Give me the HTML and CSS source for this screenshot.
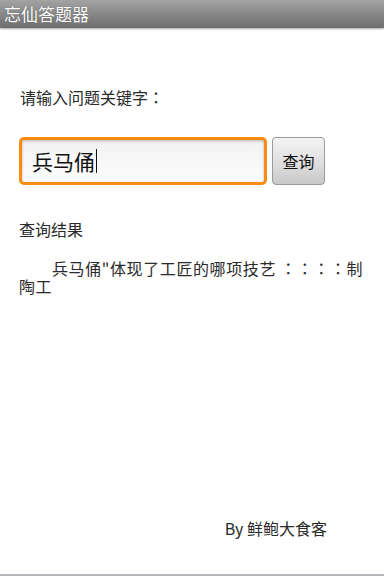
FILE: index.html
```html
<!DOCTYPE html>
<html>
<head>
<meta charset="utf-8">
<link rel="stylesheet" href="styles.css">
</head>
<body>
<div class="app">
  <div class="titlebar">忘仙答题器</div>
  <div class="content">
    <div class="label">请输入问题关键字<span class="colon">：</span></div>
    <div class="search-row">
      <div class="input"><span class="input-text">兵马俑</span><span class="caret"></span></div>
      <div class="button">查询</div>
    </div>
    <div class="result-title">查询结果</div>
    <div class="result">兵马俑"体现了工匠的哪项技艺 <span class="colon">：：：：</span>制陶工</div>
    <div class="spacer"></div>
    <div class="footer">By 鲜鲍大食客</div>
  </div>
  <div class="bottom-line"></div>
</div>
</body>
</html>
```

FILE: styles.css
```css
html, body {
  margin: 0;
  padding: 0;
  background: #ffffff;
}
.app {
  width: 384px;
  height: 576px;
  display: flex;
  flex-direction: column;
  font-family: "Noto Sans CJK SC", "DejaVu Sans", sans-serif;
  color: #2a2a2a;
  text-spacing-trim: space-all;
}
.colon {
  font-family: "Noto Sans CJK TC", sans-serif;
}
.titlebar {
  height: 28px;
  line-height: 28px;
  padding-left: 4px;
  font-size: 17px;
  color: #ffffff;
  background: linear-gradient(#a3a3a3, #888888 50%, #6e6e6e);
  box-shadow: 0 1px 2px rgba(0,0,0,0.35);
  text-shadow: 0 0 1px rgba(0,0,0,0.4);
}
.content {
  flex: 1;
  display: flex;
  flex-direction: column;
  padding: 0 19px;
}
.label {
  margin-top: 58px;
  font-size: 16px;
  line-height: 22px;
  padding-left: 1px;
}
.search-row {
  display: flex;
  gap: 5px;
  margin-top: 29px;
}
.input {
  width: 232px;
  height: 42px;
  border: 3px solid #f98a12;
  border-radius: 5px;
  background: linear-gradient(#f2f2f2, #fdfdfd);
  box-shadow: inset 0 1px 3px rgba(0,0,0,0.25);
  display: flex;
  align-items: center;
  padding-left: 10px;
}
.input-text {
  font-size: 21px;
  color: #111;
}
.caret {
  width: 1px;
  height: 24px;
  background: #111;
  margin-left: 1px;
}
.button {
  width: 51px;
  height: 46px;
  border: 1px solid #9a9a9a;
  border-radius: 4px;
  background: linear-gradient(#f4f4f4, #dcdcdc 60%, #c8c8c8);
  display: flex;
  align-items: center;
  justify-content: center;
  font-size: 16px;
  color: #111;
}
.result-title {
  margin-top: 33px;
  font-size: 16px;
  line-height: 22px;
}
.result {
  margin-top: 19px;
  margin-right: -6px;
  font-size: 16px;
  line-height: 18px;
  text-indent: 33px;
  letter-spacing: 0.6px;
}
.spacer {
  flex: 1;
}
.footer {
  align-self: flex-end;
  font-size: 16px;
  line-height: 22px;
  margin-right: 38px;
  margin-bottom: 35px;
}
.bottom-line {
  height: 2px;
  background: #b3b7bc;
}
```
